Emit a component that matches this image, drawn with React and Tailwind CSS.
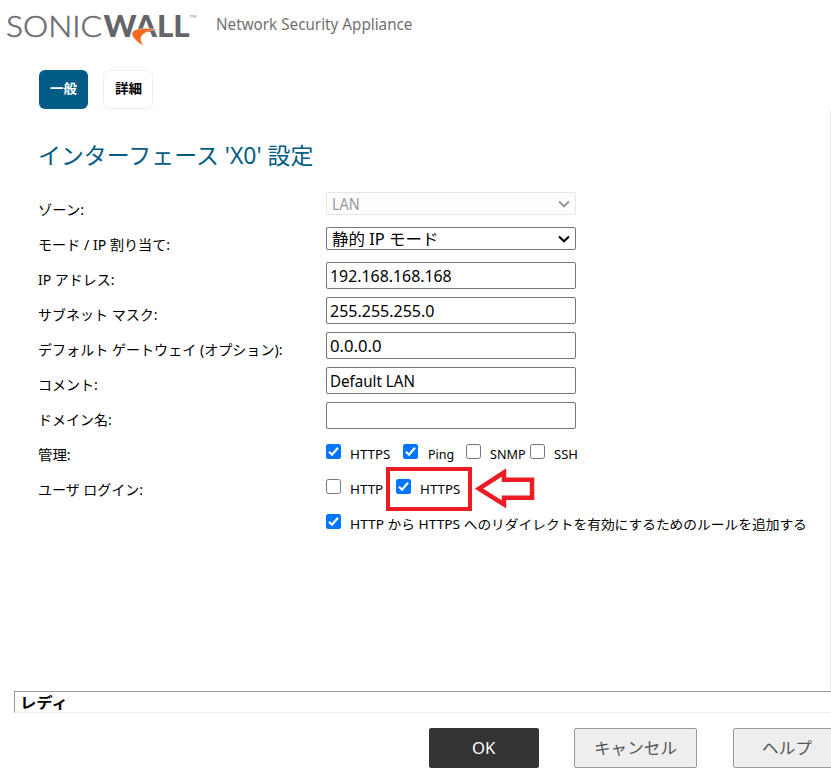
import { useLayoutEffect, useRef } from 'react';
import clsx from 'clsx';

// Single-line text condensed or widened to occupy exactly `w` pixels.
function Fit({ w, className, children }) {
  const ref = useRef(null);
  useLayoutEffect(() => {
    const el = ref.current;
    el.style.transform = `scaleX(${w / el.offsetWidth})`;
  }, [w, children]);
  return (
    <span className={clsx('block shrink-0', className)} style={{ width: w }}>
      <span ref={ref} className="inline-block origin-left whitespace-nowrap">{children}</span>
    </span>
  );
}

function Logo() {
  return (
    <svg width="200" height="50" viewBox="0 0 200 50" className="block shrink-0">
      <text x="6" y="37" fontSize="29.8" textLength="96" lengthAdjust="spacingAndGlyphs" fill="#6d6e71" stroke="#6d6e71" strokeWidth="0.6" className="font-['Lato'] font-light">SONIC</text>
      <text x="103.5" y="37" fontSize="29.8" textLength="86" lengthAdjust="spacingAndGlyphs" fill="#636569" className="font-['Lato'] font-black">WALL</text>
      <text x="189.5" y="18" fontSize="4.5" fill="#6d6e71" className="font-['Lato']">TM</text>
      <path d="M158 29.500 C150 28 141 28 136 29.700 C131.500 31.200 131 34 133.500 37.500 C136 41 139.500 43.300 143.500 46 C141.500 42 139.500 38.500 142 35.500 C145 32 151 30.300 158 29.500 Z" fill="#f26a21" stroke="#fff" strokeWidth="0.4" />
    </svg>
  );
}

function Check({ on, className }) {
  return on ? (
    <svg width="15" height="15" viewBox="0 0 15 15" className={clsx('block shrink-0', className)}>
      <rect width="15" height="15" rx="2.200" fill="#0075ff" />
      <path d="M3 7.700 L6 10.700 L12 3.800" fill="none" stroke="#fff" strokeWidth="2.200" />
    </svg>
  ) : (
    <span className={clsx('block h-[15px] w-[15px] shrink-0 rounded-[2.5px] border border-[#767676] bg-white', className)} />
  );
}

function Row({ label, w, children }) {
  return (
    <div className="flex h-[35px]">
      <div className="w-[288px] shrink-0 pt-2 text-sm leading-5">{label && <Fit w={w}>{label}</Fit>}</div>
      {children}
    </div>
  );
}

function Input({ w, children }) {
  return (
    <div className="h-[27px] w-[250px] rounded-[2px] border border-[#767676] pl-[3px] text-base leading-[26px]">
      {children && <Fit w={w}>{children}</Fit>}
    </div>
  );
}

function Select({ w, disabled, children }) {
  return (
    <div className={clsx('flex h-[23px] w-[250px] items-center justify-between rounded-[2px] border pl-[5px] pr-[5px] text-base leading-[21px]', disabled ? 'border-[#e6e6e6] bg-[#fdfdfd] text-[#999]' : 'border-[#767676] text-black')}>
      <Fit w={w} className="pt-px">{children}</Fit>
      <svg width="12" height="8" viewBox="0 0 12 8"><path d="M1 1.500 L6 6.300 L11 1.500" fill="none" stroke="currentColor" strokeWidth="2" /></svg>
    </div>
  );
}

function Option({ on, w, gap, children, className }) {
  return (
    <div className={clsx('flex', className)}>
      <Check on={on} className="mt-[7px]" />
      <div className={clsx('pt-[7px] text-[13px] leading-5', gap)}><Fit w={w}>{children}</Fit></div>
    </div>
  );
}

export default function App() {
  return (
    <div className="relative flex h-[779px] w-[831px] flex-col overflow-hidden bg-white font-['Noto_Sans','Noto_Sans_CJK_JP',sans-serif] text-black">
      <header className="flex h-[70px] shrink-0">
        <Logo />
        <div className="ml-4 pt-3 text-base leading-6 text-[#707070]"><Fit w={196}>Network Security Appliance</Fit></div>
      </header>

      <nav className="flex h-[41px] shrink-0 gap-[15px] pl-[39px] text-[13px] font-bold">
        <div className="flex h-[39px] w-[49px] items-center justify-center rounded-md bg-[#005c84] pb-px text-white"><Fit w={27}>一般</Fit></div>
        <div className="flex h-[39px] w-[50px] items-center justify-center rounded-md border border-[#eee] pb-px"><Fit w={27}>詳細</Fit></div>
      </nav>

      <main className="h-[580px] shrink-0 border-r border-[#e6e6e6] pl-[38px]">
        <h1 className="h-[81px] pt-[28px] text-[23px] font-normal leading-8 text-[#005c84]"><Fit w={275}>インターフェース 'X0' 設定</Fit></h1>
        <Row label="ゾーン:" w={46}><Select w={28} disabled>LAN</Select></Row>
        <Row label="モード / IP 割り当て:" w={132}><Select w={106}>静的 IP モード</Select></Row>
        <Row label="IP アドレス:" w={77}><Input w={122}>192.168.168.168</Input></Row>
        <Row label="サブネット マスク:" w={119}><Input w={104}>255.255.255.0</Input></Row>
        <Row label="デフォルト ゲートウェイ (オプション):" w={244}><Input w={51}>0.0.0.0</Input></Row>
        <Row label="コメント:" w={60}><Input w={85}>Default LAN</Input></Row>
        <Row label="ドメイン名:" w={74}><Input /></Row>
        <Row label="管理:" w={33}>
          <Option on w={40} gap="pl-[9px]">HTTPS</Option>
          <Option on w={26} gap="pl-[10px]" className="ml-[13px]">Ping</Option>
          <Option w={36} gap="pl-[9px]" className="ml-3">SNMP</Option>
          <Option w={24} gap="pl-[9px]" className="ml-[4px]">SSH</Option>
        </Row>
        <Row label="ユーザ ログイン:" w={105}>
          <Option w={33} gap="pl-[9px]">HTTP</Option>
          <Option on w={40} gap="pl-[9px]" className="ml-[13px]">HTTPS</Option>
        </Row>
        <Row><Option on w={457} gap="pl-[9px]">HTTP から HTTPS へのリダイレクトを有効にするためのルールを追加する</Option></Row>
      </main>

      <div className="ml-[14px] h-[22px] shrink-0 border-b border-l border-t border-b-[#eee] border-l-[#999] border-t-[#999] pl-[5px] text-[15px] font-bold leading-5"><Fit w={48}>レディ</Fit></div>

      <footer className="flex pl-[429px] pt-[15px] text-base leading-6">
        <div className="flex h-10 w-[110px] shrink-0 items-center justify-center rounded-[2px] bg-[#333] pr-px text-white"><Fit w={23}>OK</Fit></div>
        <div className="ml-[35px] flex h-10 w-[123px] shrink-0 items-center justify-center rounded-[2px] border border-[#999] bg-[#eee] text-[#555]"><Fit w={83}>キャンセル</Fit></div>
        <div className="ml-9 flex h-10 w-[110px] shrink-0 items-center justify-center rounded-[2px] border border-[#999] bg-[#eee] pr-[2px] text-[#555]"><Fit w={50}>ヘルプ</Fit></div>
      </footer>

      <svg width="150" height="46" viewBox="386 466 150 46" className="absolute left-[386px] top-[466px]" fill="none" stroke="#ed1c24" strokeWidth="4">
        <rect x="388" y="469" width="82" height="40" />
        <path d="M479 488.700 L504 472.500 V479.700 H532 V497.700 H504 V504.500 Z" strokeWidth="4.500" />
      </svg>
    </div>
  );
}
